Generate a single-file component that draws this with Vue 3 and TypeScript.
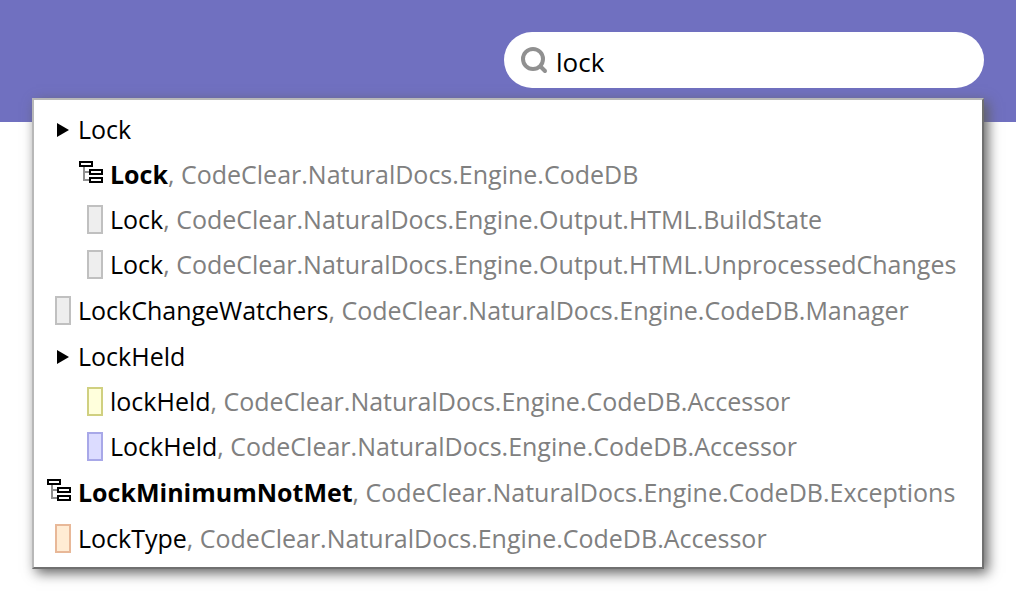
<script setup lang="ts">
import { ref } from 'vue'

type Kind = 'class' | 'function' | 'variable' | 'property' | 'type'

interface Entry {
  name: string
  scope: string
  kind: Kind
}

interface Group {
  name: string
  open: boolean
  children: Entry[]
}

const query = ref('lock')

const results = ref<(Entry | Group)[]>([
  {
    name: 'Lock',
    open: true,
    children: [
      { name: 'Lock', scope: 'CodeClear.NaturalDocs.Engine.CodeDB', kind: 'class' },
      { name: 'Lock', scope: 'CodeClear.NaturalDocs.Engine.Output.HTML.BuildState', kind: 'function' },
      { name: 'Lock', scope: 'CodeClear.NaturalDocs.Engine.Output.HTML.UnprocessedChanges', kind: 'function' },
    ],
  },
  { name: 'LockChangeWatchers', scope: 'CodeClear.NaturalDocs.Engine.CodeDB.Manager', kind: 'function' },
  {
    name: 'LockHeld',
    open: true,
    children: [
      { name: 'lockHeld', scope: 'CodeClear.NaturalDocs.Engine.CodeDB.Accessor', kind: 'variable' },
      { name: 'LockHeld', scope: 'CodeClear.NaturalDocs.Engine.CodeDB.Accessor', kind: 'property' },
    ],
  },
  { name: 'LockMinimumNotMet', scope: 'CodeClear.NaturalDocs.Engine.CodeDB.Exceptions', kind: 'class' },
  { name: 'LockType', scope: 'CodeClear.NaturalDocs.Engine.CodeDB.Accessor', kind: 'type' },
])

const isGroup = (item: Entry | Group): item is Group => 'children' in item
const entriesOf = (item: Entry | Group): Entry[] =>
  isGroup(item) ? (item.open ? item.children : []) : [item]
</script>

<template>
  <div class="page">
    <header class="header">
      <label class="search">
        <svg class="search-icon" viewBox="0 0 28 28" aria-hidden="true">
          <circle cx="13" cy="13" r="10" />
          <path d="M20.5 20.5 L25 25" />
        </svg>
        <input v-model="query" class="search-input" type="text" aria-label="Search" />
      </label>
    </header>

    <nav class="results" aria-label="Search results">
      <ul class="list">
        <li v-for="item in results" :key="item.name">
          <button
            v-if="isGroup(item)"
            class="row"
            type="button"
            :aria-expanded="item.open"
            @click="item.open = !item.open"
          >
            <span class="icon">
              <svg class="arrow" viewBox="0 0 12 14" aria-hidden="true"><path d="M0 0 L12 7 L0 14 Z" /></svg>
            </span>
            <span class="text">{{ item.name }}</span>
          </button>
          <ul class="list-inner" :class="{ nested: isGroup(item) }">
            <li v-for="entry in entriesOf(item)" :key="entry.name + entry.scope">
              <a class="row" href="#">
                <span class="icon">
                  <svg v-if="entry.kind === 'class'" class="tree" viewBox="0 0 24 22" aria-hidden="true">
                    <path class="branch" d="M5 6 V19 H10 M5 11 H10" />
                    <path class="box" d="M1 1 H13 V5 H1 Z M11 9 H23 V13 H11 Z M11 17 H23 V21 H11 Z" />
                  </svg>
                  <span v-else class="swatch" :class="entry.kind"></span>
                </span>
                <span class="text"><span :class="{ strong: entry.kind === 'class' }">{{ entry.name }}</span><span class="scope">, {{ entry.scope }}</span></span>
              </a>
            </li>
          </ul>
        </li>
      </ul>
    </nav>
  </div>
</template>

<style>
body {
  margin: 0;
  background: #fff;
}
</style>

<style scoped>
.page {
  display: flow-root;
  box-sizing: border-box;
  min-height: 100vh;
  font-family: "Segoe UI", "Open Sans", "Noto Sans", sans-serif;
  font-size: 25px;
  color: #000;
}

.header {
  display: flex;
  justify-content: flex-end;
  padding: 32px 32px 34px;
  background: #7070c0;
}

.search {
  display: flex;
  align-items: center;
  gap: 8px;
  box-sizing: border-box;
  width: 480px;
  height: 56px;
  padding: 0 16px;
  border-radius: 28px;
  background: #fff;
}

.search-icon {
  flex: none;
  width: 28px;
  height: 28px;
  fill: none;
  stroke: #909090;
  stroke-width: 4;
  stroke-linecap: round;
}

.search-input {
  flex: 1;
  min-width: 0;
  padding: 4px 0 0;
  border: 0;
  outline: 0;
  background: transparent;
  font: inherit;
  font-size: 26px;
  color: inherit;
}

.results {
  margin: -24px 32px 32px;
  padding: 7px 12px 6px;
  border: 2px solid;
  border-color: #b8b8b8 #707070 #707070 #b8b8b8;
  background: #fff;
  box-shadow: 4px 4px 12px #606060;
}

.list,
.list-inner {
  display: flex;
  flex-direction: column;
  margin: 0;
  padding: 0;
  list-style: none;
}

.list {
  gap: 1px;
}

.nested {
  padding-left: 32px;
}

.row {
  display: flex;
  align-items: center;
  gap: 7px;
  width: 100%;
  height: 45px;
  padding: 0;
  border: 0;
  background: none;
  font: inherit;
  line-height: 45px;
  color: inherit;
  text-align: left;
  text-decoration: none;
  white-space: nowrap;
  cursor: pointer;
}

.icon {
  display: flex;
  flex: none;
  justify-content: flex-end;
  width: 25px;
}

.arrow {
  width: 12px;
  height: 14px;
  margin-right: 2px;
}

.tree {
  width: 24px;
  height: 22px;
  margin-bottom: 5px;
  fill: none;
  stroke-width: 2;
  shape-rendering: crispEdges;
}

.branch {
  stroke: #909090;
}

.box {
  fill: #fff;
  stroke: #000;
}

.swatch {
  box-sizing: border-box;
  width: 16px;
  height: 29px;
  border: 2px solid #c0c0c0;
  background: #eee;
}

.variable {
  border-color: #d0d080;
  background: #ffffdc;
}

.property {
  border-color: #a8a8e8;
  background: #dcdcff;
}

.type {
  border-color: #e8b898;
  background: #ffecd4;
}

.strong {
  font-weight: 700;
}

.scope {
  color: #808080;
}
</style>
